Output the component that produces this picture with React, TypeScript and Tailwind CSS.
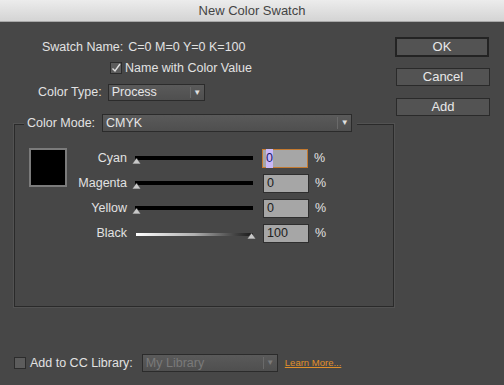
import type { FC, ReactNode } from "react"

const font = { fontFamily: '"Liberation Sans", Arial, sans-serif' }

// select box with the little divider + arrow on the right
const Select: FC<{ value: string; width: string; disabled?: boolean }> = ({ value, width, disabled }) => (
  <div
    className={`${width} h-full flex items-center border border-[#2b2b2b] bg-gradient-to-b from-[#5a5a5a] to-[#4f4f4f] ${
      disabled ? "text-[#7a7a7a]" : "text-[#e6e6e6]"
    }`}
  >
    <span className="flex-1 pl-[3px] leading-none">{value}</span>
    <div className="h-[70%] w-[1px] bg-[#2e2e2e] border-r border-[#6a6a6a]" />
    <span className={`w-[13px] text-center text-[8px] leading-none ${disabled ? "text-[#7a7a7a]" : "text-[#e0e0e0]"}`}>▼</span>
  </div>
)

const Thumb: FC<{ right?: boolean }> = ({ right }) => (
  <svg
    width="9"
    height="6"
    viewBox="0 0 9 6"
    className={`absolute top-[6px] ${right ? "right-[-3px]" : "left-[-1px]"}`}
  >
    <path d="M4.5 0 L9 6 L0 6 Z" fill="#c8c8c8" stroke="#3a3a3a" strokeWidth="0.6" />
  </svg>
)

const Slider: FC<{ black?: boolean }> = ({ black }) => (
  <div className="relative w-[120px] h-[13px] ml-[6px]">
    {black ? (
      <div className="absolute left-[3px] right-0 top-[6px] h-[3px] bg-gradient-to-r from-white via-[#b0b0b0] to-[#1a1a1a]" />
    ) : (
      <div className="absolute left-[2px] right-0 top-[4px] h-[4px] bg-black" />
    )}
    <Thumb right={black} />
  </div>
)

const Row: FC<{ label: string; value: string; focused?: boolean; black?: boolean }> = ({ label, value, focused, black }) => (
  <div className="h-[25px] flex items-center">
    <span className="w-[60px] text-right">{label}</span>
    <Slider black={black} />
    <div
      className={`ml-[9px] w-[46px] h-[19px] flex items-center bg-[#a6a6a6] text-[#202020] pl-[3px] ${
        focused ? "border-[1.5px] border-[#c47a30]" : "border border-[#2e2e2e] ml-[10px] w-[45px]"
      }`}
    >
      {focused ? <span className="bg-[#c9b8f7] text-[#1a1a6a]">{value}</span> : value}
    </div>
    <span className="ml-[6px]">%</span>
  </div>
)

const Button: FC<{ children: ReactNode; primary?: boolean }> = ({ children, primary }) => (
  <div
    className={`w-[94px] flex items-center justify-center bg-[#535353] text-[#e8e8e8] text-[13px] ${
      primary ? "h-[20px] border-2 border-[#232323]" : "h-[18px] border border-[#2a2a2a] mx-[1px] w-[92px]"
    }`}
  >
    {children}
  </div>
)

const Check: FC<{ checked?: boolean }> = ({ checked }) => (
  <div className="w-[12px] h-[12px] border border-[#2c2c2c] bg-[#5c5c5c] flex items-center justify-center">
    {checked && (
      <svg width="10" height="10" viewBox="0 0 10 10">
        <path d="M1.5 5.5 L4 8 L9 1" fill="none" stroke="#e0e0e0" strokeWidth="1.4" />
      </svg>
    )}
  </div>
)

export default function App() {
  return (
    <div className="w-[504px] h-[385px] bg-[#474747] text-[12.5px] text-[#e2e2e2] overflow-hidden" style={font}>
      {/* title bar */}
      <div className="h-[22px] bg-gradient-to-b from-[#ececec] to-[#d4d4d4] border-b border-[#a8a8a8] flex items-center justify-center text-[13px] text-[#444]">
        New Color Swatch
      </div>

      <div className="flex">
        {/* left side */}
        <div className="w-[395px]">
          <div className="mt-[17px] h-[16px] pl-[42px] flex items-center">
            <span>Swatch Name:</span>
            <span className="ml-[5px]">C=0 M=0 Y=0 K=100</span>
          </div>

          <div className="mt-[5px] h-[16px] pl-[110px] flex items-center">
            <Check checked />
            <span className="ml-[3px]">Name with Color Value</span>
          </div>

          <div className="mt-[8px] h-[17px] pl-[38px] flex items-center">
            <span>Color Type:</span>
            <div className="ml-[6px] h-full">
              <Select value="Process" width="w-[97px]" />
            </div>
          </div>

          {/* Color Mode group */}
          <div className="mt-[23px] ml-[14px] w-[380px] h-[183px] border border-[#2a2a2a] shadow-[0_0_0_1px_#525252]">
            <div className="-mt-[11px] ml-[9px] w-[333px] h-[18px] bg-[#474747] flex items-center">
              <span className="px-[3px]">Color Mode:</span>
              <div className="ml-[4px] h-full">
                <Select value="CMYK" width="w-[250px]" />
              </div>
            </div>

            <div className="mt-[14px] flex items-start">
              <div className="ml-[14px] mt-[2px] w-[38px] h-[39px] border-2 border-[#7b7b7b] bg-black" />
              <div>
                <Row label="Cyan" value="0" focused />
                <Row label="Magenta" value="0" />
                <Row label="Yellow" value="0" />
                <Row label="Black" value="100" black />
              </div>
            </div>
          </div>

          {/* bottom */}
          <div className="mt-[47px] h-[18px] pl-[14px] flex items-center">
            <Check />
            <span className="ml-[4px]">Add to CC Library:</span>
            <div className="ml-[9px] h-full">
              <Select value="My Library" width="w-[136px]" disabled />
            </div>
            <span className="ml-[7px] text-[9.5px] text-[#e0902a] underline">Learn More...</span>
          </div>
        </div>

        {/* buttons */}
        <div className="mt-[15px] flex flex-col gap-[11px]">
          <Button primary>OK</Button>
          <Button>Cancel</Button>
          <div className="mt-[1px]">
            <Button>Add</Button>
          </div>
        </div>
      </div>
    </div>
  )
}
